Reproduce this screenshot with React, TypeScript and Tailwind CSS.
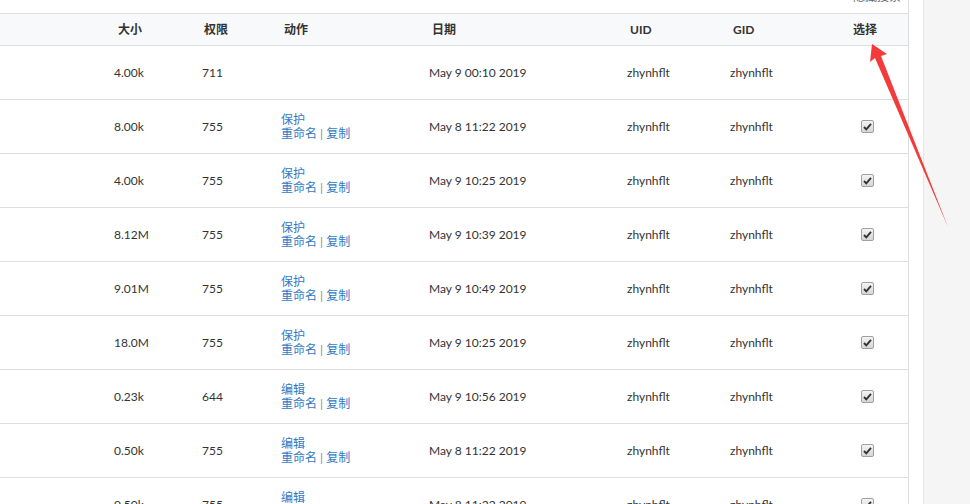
import React from 'react';

type Row = {
  size: string;
  perm: string;
  action?: '保护' | '编辑';
  date: string;
  checked: boolean;
};

const rows: Row[] = [
  { size: '4.00k', perm: '711', date: 'May 9 00:10 2019', checked: false },
  { size: '8.00k', perm: '755', action: '保护', date: 'May 8 11:22 2019', checked: true },
  { size: '4.00k', perm: '755', action: '保护', date: 'May 9 10:25 2019', checked: true },
  { size: '8.12M', perm: '755', action: '保护', date: 'May 9 10:39 2019', checked: true },
  { size: '9.01M', perm: '755', action: '保护', date: 'May 9 10:49 2019', checked: true },
  { size: '18.0M', perm: '755', action: '保护', date: 'May 9 10:25 2019', checked: true },
  { size: '0.23k', perm: '644', action: '编辑', date: 'May 9 10:56 2019', checked: true },
  { size: '0.50k', perm: '755', action: '编辑', date: 'May 8 11:22 2019', checked: true },
  { size: '0.50k', perm: '755', action: '编辑', date: 'May 8 11:22 2019', checked: true },
];

const cols = 'grid grid-cols-[114px_88px_79px_148px_198px_103px_96px_82px]';

function CheckBox() {
  return (
    <div className="flex h-[13px] w-[13px] items-center justify-center rounded-[2px] border border-[#a0a0a0] bg-gradient-to-b from-[#f4f4f4] to-[#d6d6d6]">
      <svg width="9" height="9" viewBox="0 0 9 9">
        <path d="M1 5 L3.3 7.3 L8 1.8" fill="none" stroke="#333" strokeWidth="1.9" />
      </svg>
    </div>
  );
}

export default function App() {
  return (
    <div className="relative flex h-[504px] w-[970px] overflow-hidden bg-white text-[12px] text-[#333] [font-family:Lato,'Noto_Sans_CJK_SC',sans-serif]">
      <div className="w-[923px] shrink-0 bg-white">
        <div className="w-[909px] border-r border-[#ddd]">
          <div className="flex h-[13px] items-start justify-end overflow-hidden pr-[7px]">
            <span className="mt-[-10px] text-[12px] leading-[14px] text-[#666]">隐藏搜索</span>
          </div>
          <div className={`${cols} h-[33px] items-center border-y border-[#ddd] bg-[#f8f9fa] font-bold`}>
            <div />
            <div className="pl-[4px]">大小</div>
            <div className="pl-[2px]">权限</div>
            <div className="pl-[3px]">动作</div>
            <div className="pl-[3px]">日期</div>
            <div className="pl-[3px]">UID</div>
            <div className="pl-[3px]">GID</div>
            <div className="text-center pr-[4px]">选择</div>
          </div>
          {rows.map((r, i) => (
            <div key={i} className={`${cols} h-[54px] items-center border-b border-[#ddd] leading-[14px]`}>
              <div />
              <div>{r.size}</div>
              <div>{r.perm}</div>
              <div className="text-[#2f7ac4]">
                {r.action && (
                  <>
                    <div>{r.action}</div>
                    <div>
                      重命名 <span className="text-[#8a8a8a]">|</span> 复制
                    </div>
                  </>
                )}
              </div>
              <div>{r.date}</div>
              <div>zhynhflt</div>
              <div>zhynhflt</div>
              <div className="flex justify-center pl-[1px]">{r.checked && <CheckBox />}</div>
            </div>
          ))}
        </div>
      </div>
      <div className="flex-1 border-l border-[#e6e6e6] bg-[#f5f5f5]" />
      <svg className="pointer-events-none absolute left-0 top-0" width="970" height="504">
        <polygon points="872,44 887,54 881,56 948,227 875,58 870,62" fill="#f43b3b" />
      </svg>
    </div>
  );
}
